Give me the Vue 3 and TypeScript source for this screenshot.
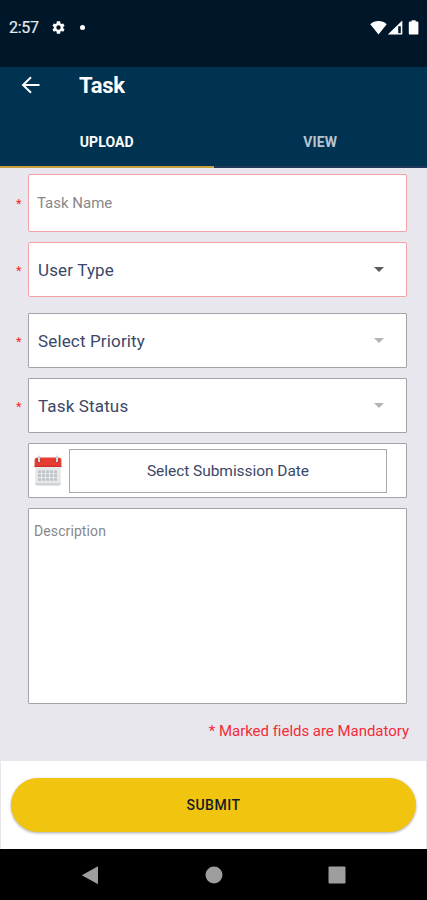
<script setup lang="ts">
import { ref } from 'vue'

interface SelectField {
  id: string
  label: string
  invalid: boolean
}

const selects: SelectField[] = [
  { id: 'user-type', label: 'User Type', invalid: true },
  { id: 'task-priority', label: 'Select Priority', invalid: false },
  { id: 'task-status', label: 'Task Status', invalid: false },
]
const tabs = ['UPLOAD', 'VIEW']
const activeTab = ref('UPLOAD')
const taskName = ref('')
const description = ref('')
const calendarRows = [15.4, 19.2, 23]
const calendarColumns = [4, 8, 12, 16, 20]
</script>

<template>
  <div class="screen">
    <header class="statusbar">
      <span class="time">2:57</span>
      <svg class="gear" viewBox="0 0 24 24"><path fill="#fff" fill-rule="evenodd" d="M19.4 13a7.700 7.700 0 0 0 0-2l2.300-1.700-2.200-3.900-2.700 1.100a7.500 7.500 0 0 0-1.700-1L14.700 2H9.300l-.4 3.500a7.500 7.500 0 0 0-1.700 1L4.500 5.400 2.300 9.300 4.600 11a7.700 7.700 0 0 0 0 2l-2.300 1.700 2.200 3.900 2.700-1.100a7.500 7.500 0 0 0 1.700 1l.4 3.500h5.400l.4-3.500a7.500 7.500 0 0 0 1.700-1l2.700 1.100 2.200-3.900zM12 15.500a3.500 3.500 0 1 1 0-7 3.500 3.500 0 0 1 0 7z" /></svg>
      <span class="dot"></span>
      <svg class="signals" viewBox="0 0 50 16">
        <path fill="#fff" d="M0.300 4.200C4.500-.1 12.500-.1 16.700 4.200L8.500 14.600z" />
        <path fill="#fff" d="M32.300.6V14.600H17.800z" />
        <path fill="#00172a" d="M28.200 6.200h2.600v7h-2.600z" />
        <path fill="#fff" d="M41.600.2h4v1.300h1.600q1.200 0 1.200 1.200v10.700q0 1.200-1.200 1.200H40q-1.200 0-1.200-1.200V2.700q0-1.200 1.200-1.200h1.600z" />
      </svg>
    </header>

    <div class="appbar">
      <div class="title-row">
        <svg class="back" viewBox="0 0 20 18"><path d="M18.500 9H2M10 1.200L2 9l8 7.800" fill="none" stroke="#fff" stroke-width="2" /></svg>
        <h1>Task</h1>
      </div>
      <nav class="tabs">
        <button v-for="tab in tabs" :key="tab" class="tab" :class="{ active: tab === activeTab }" @click="activeTab = tab">{{ tab }}</button>
      </nav>
    </div>

    <main class="form">
      <div class="row">
        <span class="star">*</span>
        <input v-model="taskName" class="box invalid name" placeholder="Task Name" />
      </div>
      <div v-for="field in selects" :key="field.id" class="row" :class="field.id">
        <span class="star">*</span>
        <div class="box select" :class="{ invalid: field.invalid }">
          <span>{{ field.label }}</span>
          <svg class="caret" viewBox="0 0 10 5"><path d="M0 0h10L5 5z" /></svg>
        </div>
      </div>
      <div class="box date">
        <svg class="calendar" viewBox="0 0 28 32">
          <path d="M1.200 9h25.600v19.500q0 2-2 2H3.200q-2 0-2-2z" fill="#e6e8e9" />
          <path d="M1.200 28q0 2.500 2 2.500h21.600q2 0 2-2.500z" fill="#d2d5d7" />
          <path d="M.6 12V5.500q0-3 3-3h20.800q3 0 3 3V12z" fill="#e63c32" />
          <path d="M.6 10.700h26.800V12H.6z" fill="#cf322b" />
          <g v-for="y in calendarRows" :key="y">
            <rect v-for="x in calendarColumns" :key="x" :x="x" :y="y" width="3" height="2.800" fill="#bec4c8" />
          </g>
          <circle cx="4.800" cy="5.600" r="2.100" fill="#a82c28" />
          <circle cx="23.200" cy="5.600" r="2.100" fill="#a82c28" />
          <path d="M5 6.200V1.500M23 6.200V1.500" stroke="#cfd6da" stroke-width="2.200" stroke-linecap="round" />
        </svg>
        <button class="pick">Select Submission Date</button>
      </div>
      <textarea v-model="description" class="box description" placeholder="Description"></textarea>
      <p class="note">* Marked fields are Mandatory</p>
    </main>

    <footer class="footer"><button class="submit">SUBMIT</button></footer>
    <div class="sysnav">
      <svg viewBox="0 0 18 18"><path d="M17 .2v18L.8 9.200z" /></svg>
      <svg viewBox="0 0 18 18"><circle cx="9" cy="9" r="8.500" /></svg>
      <svg viewBox="0 0 18 18"><rect x=".5" y=".5" width="17" height="17" rx="1" /></svg>
    </div>
  </div>
</template>

<style>
body { margin: 0; background: #000; }
</style>

<style scoped>
.screen { width: 427px; height: 900px; display: flex; flex-direction: column; overflow: hidden; background: #e8e7ed; font-family: Roboto, sans-serif; }
.screen * { box-sizing: border-box; }
button { border: 0; padding: 0; background: none; font-family: inherit; }
.statusbar { height: 67px; flex: none; display: flex; align-items: center; padding: 0 7px 12px 9px; background: #00172a; color: #e6eaee; }
.time { width: 42px; font-size: 16px; line-height: 20px; letter-spacing: -.3px; padding-top: 1px; -webkit-text-stroke: .2px; }
.gear { width: 15px; height: 15px; }
.dot { width: 5px; height: 5px; margin-left: 14px; border-radius: 50%; background: #fff; }
.signals { width: 50px; height: 16px; margin-left: auto; }
.appbar { height: 101px; flex: none; background: #003252; display: flex; flex-direction: column; }
.title-row { height: 50px; padding: 0 0 14px 21px; display: flex; align-items: center; }
.back { width: 20px; height: 18px; margin-top: -1px; }
h1 { margin: 1px 0 0 38px; color: #fff; font-size: 22px; font-weight: 700; line-height: 28px; letter-spacing: -.3px; }
.tabs { flex: 1; display: flex; }
.tab { flex: 1; padding-top: 1px; border-bottom: 2px solid #23375b; color: #b7c5d0; font-size: 14px; font-weight: 700; letter-spacing: .1px; }
.tab.active { color: #fff; border-bottom-color: #c8a13c; }
.form { height: 593px; flex: none; padding: 6px 20px 0 0; }
.row { display: flex; align-items: center; margin-bottom: 10px; }
.star { width: 28px; flex: none; padding: 2px 0 0 16px; color: #f52b32; font-size: 13px; line-height: 16px; }
.box { border: 1px solid #a3a3a8; background: #fff; border-radius: 1px; }
.row .box { flex: 1; min-width: 0; height: 55px; }
.row .invalid { border: 1.500px solid #f3a2a5; border-radius: 2px; }
.row .name { height: 58px; padding: 0 8px; font-family: inherit; font-size: 15px; letter-spacing: 0; outline: none; }
.name::placeholder, .description::placeholder { color: #87878a; opacity: 1; }
.user-type { margin-bottom: 16px; }
.select { display: flex; align-items: center; justify-content: space-between; padding: 1px 22px 0 9px; color: #3b4768; font-size: 17px; letter-spacing: .15px; }
.caret { width: 10px; height: 5px; margin-top: -2px; fill: #b5b5b5; }
.invalid .caret { fill: #5b5b5b; }
.date { height: 55px; margin-left: 28px; padding: 5px 19px 4px 5px; display: flex; align-items: center; }
.calendar { width: 28px; height: 32px; flex: none; margin-right: 7px; }
.pick { flex: 1; height: 44px; border: 1px solid #aaaaad; color: #3b4768; font-size: 15.500px; letter-spacing: -.05px; }
.description { display: block; width: 379px; height: 196px; margin: 10px 0 0 28px; padding: 13px 5px; resize: none; outline: none; font-family: inherit; font-size: 14px; line-height: 18px; letter-spacing: .1px; }
.note { margin: 17px -2px 0 0; text-align: right; color: #f22c38; font-size: 15px; line-height: 20px; letter-spacing: -.03px; }
.footer { height: 88px; flex: none; margin: 0 1px; padding: 17px 10px 0; background: #fff; }
.submit { display: block; width: 405px; height: 54px; border-radius: 27px; background: #f1c40f; color: #111c28; font-size: 14px; font-weight: 500; letter-spacing: .5px; box-shadow: 0 1px 3px rgba(0, 0, 0, .35); }
.sysnav { height: 51px; flex: none; display: flex; justify-content: space-between; align-items: center; padding: 0 81px 0 81px; background: #000; }
.sysnav svg { width: 18px; height: 18px; fill: #9e9e9e; }
</style>
